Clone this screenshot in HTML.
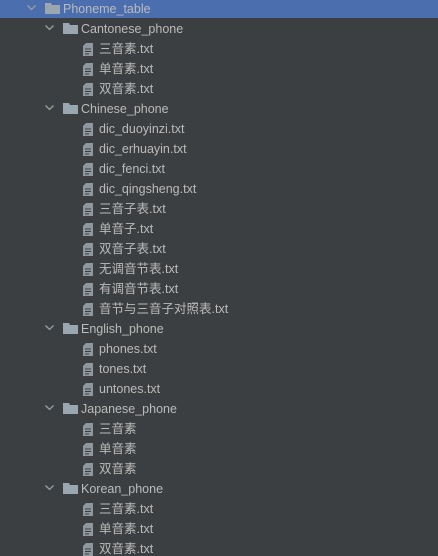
<!DOCTYPE html>
<html><head><meta charset="utf-8"><style>
html,body{margin:0;padding:0;background:#3c3f41;width:438px;height:556px;overflow:hidden}
body{font-family:"Liberation Sans","Noto Sans CJK SC",sans-serif;font-size:12.5px;color:#bbbbbb;position:relative}
.r{position:absolute;left:0;width:438px;height:20px;line-height:18px;white-space:nowrap}
.sel{background:#4b6eaf;height:18px;top:0}
.r svg{position:absolute}
.t{position:absolute;top:0}
</style></head><body>
<div id="c"></div>
<script>
const rows=[
[0,'Phoneme_table','d'],
[1,'Cantonese_phone','d'],[2,'三音素.txt'],[2,'单音素.txt'],[2,'双音素.txt'],
[1,'Chinese_phone','d'],[2,'dic_duoyinzi.txt'],[2,'dic_erhuayin.txt'],[2,'dic_fenci.txt'],[2,'dic_qingsheng.txt'],[2,'三音子表.txt'],[2,'单音子.txt'],[2,'双音子表.txt'],[2,'无调音节表.txt'],[2,'有调音节表.txt'],[2,'音节与三音子对照表.txt'],
[1,'English_phone','d'],[2,'phones.txt'],[2,'tones.txt'],[2,'untones.txt'],
[1,'Japanese_phone','d'],[2,'三音素'],[2,'单音素'],[2,'双音素'],
[1,'Korean_phone','d'],[2,'三音素.txt'],[2,'单音素.txt'],[2,'双音素.txt']];
let h='';
rows.forEach((r,i)=>{
 const top=i===0?0:-2+20*i;
 const lv=r[0],x=27+18*lv;
 h+=`<div class="r${i===0?' sel':''}" style="top:${top}px">`;
 const oy=i===0?0:2;
 if(r[2]==='d'){
  h+=`<svg style="left:${x}px;top:${oy+5}px" width="9" height="6" viewBox="0 0 9 6"><path d="M0.5 0.5L4.5 4.5L8.5 0.5" fill="none" stroke="#9a9da0" stroke-width="1.3"/></svg>`;
  h+=`<svg style="left:${x+18}px;top:${oy+3}px" width="15" height="11" viewBox="0 0 15 11"><path d="M0 0H6L7 2H15V11H0Z" fill="#9aa7b0"/></svg>`;
  h+=`<span class="t" style="left:${x+36}px;top:${oy}px">${r[1]}</span>`;
 }else{
  h+=`<svg style="left:83px;top:${oy+3}px" width="10" height="13" viewBox="0 0 10 13"><path d="M3 0H10V13H0V3Z" fill="#8f989e"/><path d="M2 6H8M2 8.5H8M2 11H6" stroke="#3c3f41" stroke-width="1"/></svg>`;
  h+=`<span class="t" style="left:99px;top:${oy}px">${r[1]}</span>`;
 }
 h+='</div>';
});
document.getElementById('c').innerHTML=h;
</script>
</body></html>
